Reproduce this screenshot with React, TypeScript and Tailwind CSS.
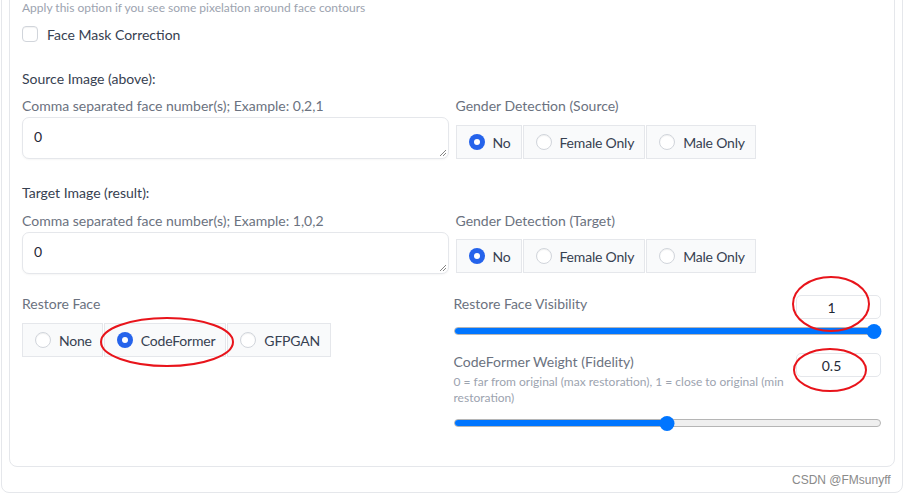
import React from 'react';

const font = { fontFamily: 'Lato, "Noto Sans", sans-serif' };

type Opt = { label: string; checked?: boolean };

function RadioGroup({ options }: { options: Opt[] }) {
  return (
    <div className="flex gap-[1px]">
      {options.map((o) => (
        <label
          key={o.label}
          className="flex h-[34px] items-center gap-[8px] border border-[#e5e7eb] bg-[#f9fafb] pl-[12px] pr-[10px] text-[14px] tracking-[-0.2px] text-[#374151]"
        >
          {o.checked ? (
            <span className="flex h-4 w-4 items-center justify-center rounded-full bg-[#2563eb]">
              <span className="h-[6px] w-[6px] rounded-full bg-white" />
            </span>
          ) : (
            <span className="h-4 w-4 rounded-full border border-[#d1d5db] bg-white shadow-[inset_0_1px_1px_rgba(0,0,0,0.06)]" />
          )}
          <span>{o.label}</span>
        </label>
      ))}
    </div>
  );
}

function FaceBox({ value }: { value: string }) {
  return (
    <div className="relative mt-[1px] h-[42px] w-full rounded-[7px] border border-[#e5e7eb] bg-white shadow-[0_1px_2px_rgba(0,0,0,0.04)]">
      <div className="px-[11px] pt-[9px] text-[14px] leading-5 text-[#1f2937]">{value}</div>
      {/* resize grip */}
      <svg className="absolute bottom-[1px] right-[1px]" width="8" height="8" viewBox="0 0 8 8">
        <path d="M7 1L1 7M7 4L4 7" stroke="#666" strokeWidth="0.8" />
      </svg>
    </div>
  );
}

function NumberBox({ value }: { value: string }) {
  return (
    <div className="flex h-[24px] w-[85px] items-center justify-center rounded-[5px] border border-[#e5e7eb] bg-white pr-[14px] text-[14px] text-[#1f2937]">
      {value}
    </div>
  );
}

function Slider({ pct }: { pct: number }) {
  return (
    <div className="relative flex h-[14px] items-center">
      <div className="h-[8px] w-full overflow-hidden rounded-full border border-[#b5b5b5] bg-[#efefef]">
        <div className="h-full bg-[#0075ff]" style={{ width: `${pct}%` }} />
      </div>
      <div
        className="absolute top-0 h-[15px] w-[15px] -translate-x-1/2 rounded-full bg-[#0075ff]"
        style={{ left: `calc(7px + (100% - 14px) * ${pct / 100})` }}
      />
    </div>
  );
}

export default function App() {
  const gender: Opt[] = [
    { label: 'No', checked: true },
    { label: 'Female Only' },
    { label: 'Male Only' },
  ];

  return (
    <div className="relative h-[495px] w-[905px] overflow-hidden bg-white" style={font}>
      <div className="ml-[1px] mt-[-12px] h-[505px] w-[902px] rounded-lg border border-[#e5e7eb] px-[7px] pb-[25px]">
        <div className="h-full w-full rounded-lg border border-[#e5e7eb] px-[12px] pt-[10px]">
          <p className="text-[12px] leading-4 text-[#9ca3af]">
            Apply this option if you see some pixelation around face contours
          </p>

          <label className="mt-[8px] flex h-5 items-center gap-[9px] text-[14px] text-[#374151]">
            <span className="h-4 w-4 rounded-[4px] border border-[#d1d5db] bg-white shadow-[inset_0_1px_1px_rgba(0,0,0,0.05)]" />
            Face Mask Correction
          </label>

          <div className="mt-[25px] text-[14px] leading-5 text-[#374151]">Source Image (above):</div>
          <div className="mt-[7px] grid grid-cols-2 gap-[7px]">
            <div>
              <div className="text-[14px] leading-5 text-[#6b7280]">
                Comma separated face number(s); Example: 0,2,1
              </div>
              <FaceBox value="0" />
            </div>
            <div>
              <div className="text-[14px] leading-5 text-[#6b7280]">Gender Detection (Source)</div>
              <div className="mt-[9px]">
                <RadioGroup options={gender} />
              </div>
            </div>
          </div>

          <div className="mt-[24px] text-[14px] leading-5 text-[#374151]">Target Image (result):</div>
          <div className="mt-[8px] grid grid-cols-2 gap-[7px]">
            <div>
              <div className="text-[14px] leading-5 text-[#6b7280]">
                Comma separated face number(s); Example: 1,0,2
              </div>
              <FaceBox value="0" />
            </div>
            <div>
              <div className="text-[14px] leading-5 text-[#6b7280]">Gender Detection (Target)</div>
              <div className="mt-[8px]">
                <RadioGroup options={gender} />
              </div>
            </div>
          </div>

          <div className="mt-[20px] grid grid-cols-2 gap-[3px]">
            <div>
              <div className="text-[14px] leading-5 text-[#6b7280]">Restore Face</div>
              <div className="mt-[9px]">
                <RadioGroup
                  options={[{ label: 'None' }, { label: 'CodeFormer', checked: true }, { label: 'GFPGAN' }]}
                />
              </div>
            </div>
            <div className="pr-[1px]">
              <div className="flex items-start justify-between">
                <div className="text-[14px] leading-5 text-[#6b7280]">Restore Face Visibility</div>
                <div className="mt-[1px]">
                  <NumberBox value="1" />
                </div>
              </div>
              <div className="mt-[5px]">
                <Slider pct={100} />
              </div>

              <div className="mt-[14px] flex items-start justify-between">
                <div className="w-[345px]">
                  <div className="text-[14px] leading-5 text-[#6b7280]">CodeFormer Weight (Fidelity)</div>
                  <p className="mt-[2px] text-[12px] leading-4 text-[#9ca3af]">
                    0 = far from original (max restoration), 1 = close to original (min restoration)
                  </p>
                </div>
                <div className="mt-[1px]">
                  <NumberBox value="0.5" />
                </div>
              </div>
              <div className="mt-[10px]">
                <Slider pct={50} />
              </div>
            </div>
          </div>
        </div>
      </div>

      <span className="absolute left-[792px] top-[471px] text-[12px] text-[#8a8a8a]" style={{ fontFamily: '"Liberation Sans", sans-serif' }}>
        CSDN @FMsunyff
      </span>

      {/* red annotation ellipses */}
      <svg className="pointer-events-none absolute left-0 top-0" width="905" height="495">
        <ellipse cx="831" cy="304" rx="38" ry="27" fill="none" stroke="#e8141b" strokeWidth="2" />
        <ellipse cx="830" cy="370" rx="36" ry="21" fill="none" stroke="#e8141b" strokeWidth="2" />
        <ellipse cx="167" cy="342" rx="66" ry="24" fill="none" stroke="#e8141b" strokeWidth="2" />
      </svg>
    </div>
  );
}
